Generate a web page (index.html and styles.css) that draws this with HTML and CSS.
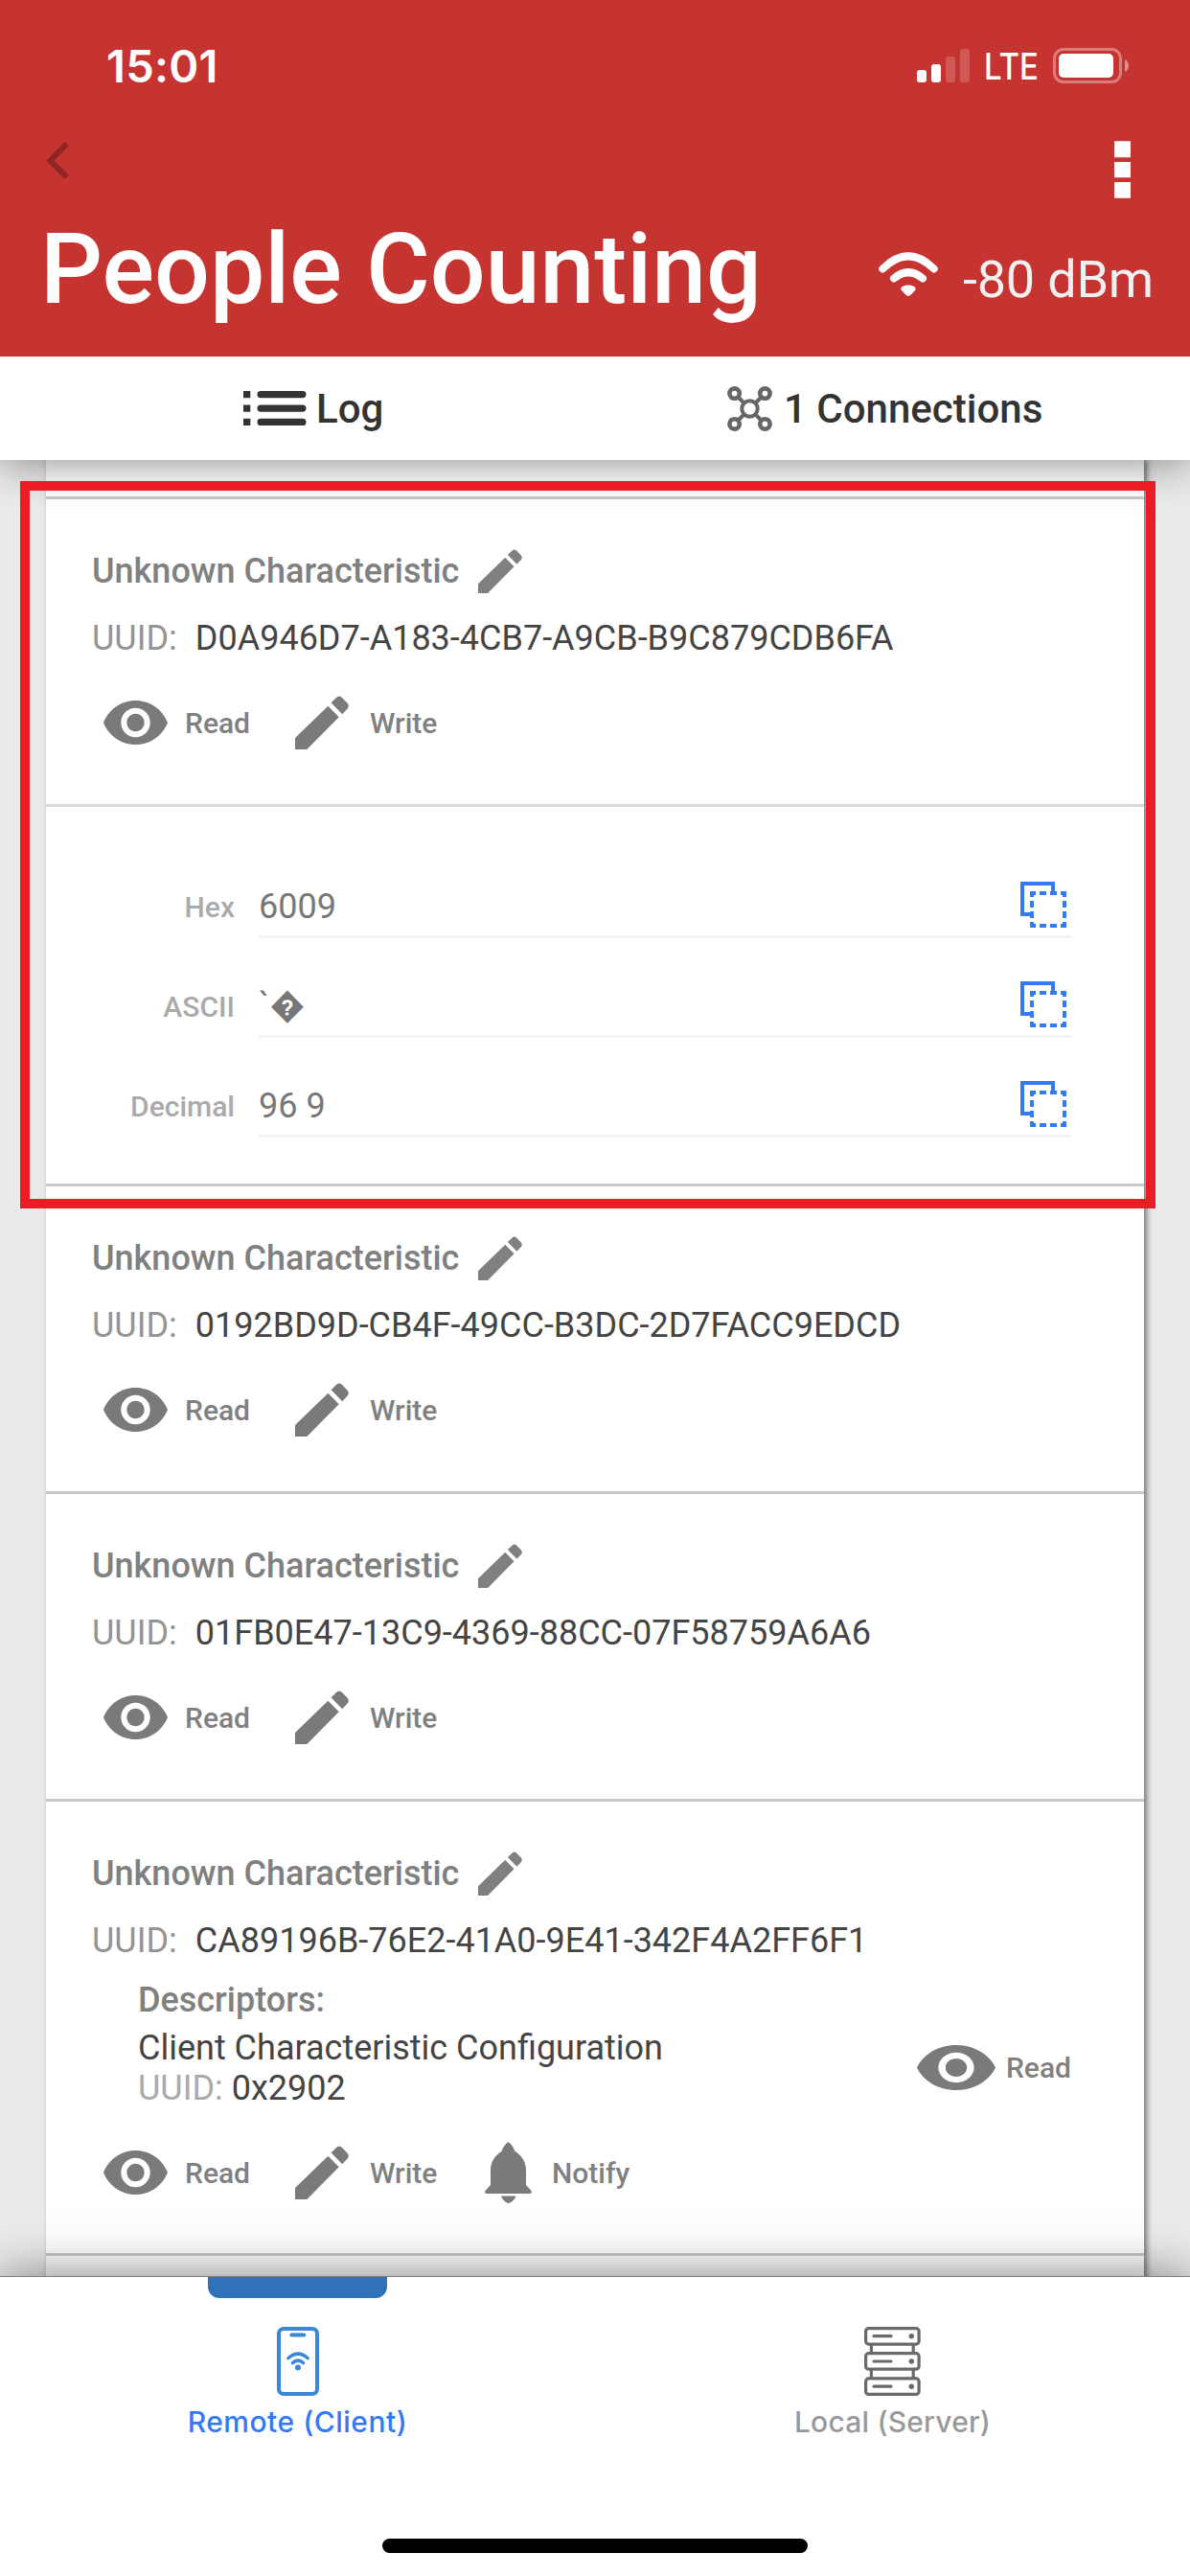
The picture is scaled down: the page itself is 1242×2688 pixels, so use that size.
FILE: index.html
```html
<!DOCTYPE html>
<html lang="en">
<head>
<meta charset="utf-8">
<title>People Counting</title>
<link rel="stylesheet" href="styles.css">
</head>
<body>
<svg class="sprite" aria-hidden="true">
  <symbol id="eye" viewBox="1 4.5 22 15" preserveAspectRatio="none"><path d="M12 4.5C7 4.5 2.73 7.61 1 12c1.73 4.39 6 7.5 11 7.5s9.27-3.11 11-7.5c-1.73-4.39-6-7.5-11-7.5zM12 17c-2.76 0-5-2.24-5-5s2.24-5 5-5 5 2.24 5 5-2.24 5-5 5zm0-8c-1.66 0-3 1.34-3 3s1.34 3 3 3 3-1.34 3-3-1.34-3-3-3z" fill="currentColor"/></symbol>
  <symbol id="pencil" viewBox="0 0 56 56"><path d="M0 56V44L34.4 10.7L45.7 22.3L12.3 56ZM37.6 7.3L43 2Q46 -1 49 2L54.4 7.6Q57.2 10.6 54.4 13.8L49.2 19.3Z" fill="currentColor"/></symbol>
  <symbol id="bell" viewBox="0 0 49 64"><path d="M24.5 .5C27 .5 31 8 31.5 10C37 13 43 20 43 29V45L48.5 51Q49.5 54 47 54H2Q-.5 54 .5 51L6 45V29C6 20 12 13 17.5 10C18 8 22 .5 24.5 .5ZM17 56.5H32.5C31.5 60 27 64 24.7 64S18 60 17 56.5Z" fill="currentColor"/></symbol>
  <symbol id="copy" viewBox="0 0 48 48"><g fill="none" stroke="currentColor" stroke-width="4"><path d="M14 34H2V2H34V13"/><path d="M20 12H46V46H12V12H20" stroke-dasharray="7 4 7 4 8 4"/></g></symbol>
</svg>

<div class="app">
  <header class="header">
    <div class="status">
      <span class="clock">15:01</span>
      <div class="status-icons">
        <svg class="bars" width="55" height="35" viewBox="0 0 55 35" fill="#fff"><rect y="22" width="10" height="13" rx="3"/><rect x="15" y="16" width="10" height="19" rx="3"/><g opacity=".18"><rect x="30" y="8" width="10" height="27" rx="3"/><rect x="45" width="10" height="35" rx="3"/></g></svg>
        <span class="network">LTE</span>
        <svg class="battery" width="79" height="37" viewBox="0 0 79 37"><rect x="1.5" y="1.5" width="69" height="34" rx="9.5" fill="none" stroke="#fff" stroke-opacity=".36" stroke-width="3"/><rect x="6" y="6" width="57" height="25" rx="5" fill="#fff"/><path d="M75 12Q79 14.500 79 18.500T75 25Z" fill="#fff" fill-opacity=".45"/></svg>
      </div>
    </div>
    <div class="nav">
      <svg class="back" width="24" height="39" viewBox="0 0 24 39"><path d="M21.700 2.200L4.500 19.500L21.700 36.800" fill="none" stroke="#912425" stroke-width="6"/></svg>
      <svg class="menu" width="17" height="60" viewBox="0 0 17 60" fill="#fff"><path d="M0 .3H17V17.300H0ZM0 22H17V38.200H0ZM0 43H17V59.700H0Z"/></svg>
    </div>
    <div class="heading">
      <h1 class="title">People Counting</h1>
      <div class="signal">
        <svg width="62" height="46" viewBox="0 0 62 46"><g fill="none" stroke="#fff" stroke-linecap="round" stroke-width="8"><path d="M4.300 17.500Q31 -9 57.700 17.500"/><path d="M16 27.500Q31 15 46 27.500"/></g><path d="M31 46Q29.500 46 28 44.300L24 40C21.500 37 26 34.500 31 34.500S40.500 37 38 40L34 44.300Q32.500 46 31 46Z" fill="#fff"/></svg>
        <span class="rssi">-80 dBm</span>
      </div>
    </div>
  </header>

  <nav class="toolbar">
    <div class="tool tool-log">
      <svg width="66" height="36" viewBox="0 0 66 36" fill="#333"><path d="M0 0H7.300V7.200H0ZM0 14.500H7.300V21.700H0ZM0 28.800H7.300V36H0Z"/><rect x="14.500" width="51" height="7.200" rx="3.600"/><rect x="14.500" y="14.500" width="51" height="7.200" rx="3.600"/><rect x="14.500" y="28.800" width="51" height="7.200" rx="3.600"/></svg>
      <span>Log</span>
    </div>
    <div class="tool tool-connections">
      <svg width="47" height="47" viewBox="0 0 47 47" fill="none" stroke="#666" stroke-width="4.600"><circle cx="7.600" cy="7.600" r="5.200"/><circle cx="39.400" cy="7.600" r="5.200"/><circle cx="7.600" cy="39.400" r="5.200"/><circle cx="39.400" cy="39.400" r="5.200"/><circle cx="23.500" cy="23.500" r="8.200" stroke-width="4"/><path d="M11 11L17.500 17.500M36 11L29.500 17.500M11 36L17.500 29.500M36 36L29.500 29.500" stroke-width="4"/></svg>
      <span>1 Connections</span>
    </div>
  </nav>

  <main class="content">
    <div class="card">
      <div class="previous"></div>

      <section class="characteristic">
        <h2 class="name">Unknown Characteristic <svg class="edit"><use href="#pencil"/></svg></h2>
        <p class="uuid"><span class="key">UUID:</span>D0A946D7-A183-4CB7-A9CB-B9C879CDB6FA</p>
        <div class="actions">
          <div class="action read"><svg><use href="#eye"/></svg>Read</div>
          <div class="action write"><svg><use href="#pencil"/></svg>Write</div>
        </div>
      </section>
      <div class="values">
        <div class="value"><span class="label">Hex</span><div class="field"><span>6009</span><svg class="copy"><use href="#copy"/></svg></div></div>
        <div class="value"><span class="label">ASCII</span><div class="field"><span>`&#xFFFD;</span><svg class="copy"><use href="#copy"/></svg></div></div>
        <div class="value"><span class="label">Decimal</span><div class="field"><span>96 9</span><svg class="copy"><use href="#copy"/></svg></div></div>
      </div>

      <section class="characteristic">
        <h2 class="name">Unknown Characteristic <svg class="edit"><use href="#pencil"/></svg></h2>
        <p class="uuid"><span class="key">UUID:</span>0192BD9D-CB4F-49CC-B3DC-2D7FACC9EDCD</p>
        <div class="actions">
          <div class="action read"><svg><use href="#eye"/></svg>Read</div>
          <div class="action write"><svg><use href="#pencil"/></svg>Write</div>
        </div>
      </section>

      <section class="characteristic">
        <h2 class="name">Unknown Characteristic <svg class="edit"><use href="#pencil"/></svg></h2>
        <p class="uuid"><span class="key">UUID:</span>01FB0E47-13C9-4369-88CC-07F58759A6A6</p>
        <div class="actions">
          <div class="action read"><svg><use href="#eye"/></svg>Read</div>
          <div class="action write"><svg><use href="#pencil"/></svg>Write</div>
        </div>
      </section>

      <section class="characteristic with-descriptors">
        <h2 class="name">Unknown Characteristic <svg class="edit"><use href="#pencil"/></svg></h2>
        <p class="uuid"><span class="key">UUID:</span>CA89196B-76E2-41A0-9E41-342F4A2FF6F1</p>
        <div class="descriptors">
          <h3 class="descriptors-title">Descriptors:</h3>
          <div class="descriptor">
            <div>
              <p class="descriptor-line">Client Characteristic Configuration</p>
              <p class="descriptor-line"><span class="descriptor-key">UUID:</span> 0x2902</p>
            </div>
            <div class="action descriptor-read"><svg><use href="#eye"/></svg>Read</div>
          </div>
        </div>
        <div class="actions">
          <div class="action read"><svg><use href="#eye"/></svg>Read</div>
          <div class="action write"><svg><use href="#pencil"/></svg>Write</div>
          <div class="action notify"><svg><use href="#bell"/></svg>Notify</div>
        </div>
      </section>
      <div class="next"></div>
    </div>
  </main>

  <footer class="tabbar">
    <div class="tabs">
      <div class="tab active">
        <span class="indicator"></span>
        <svg width="44" height="72" viewBox="0 0 44 72" fill="none" stroke="#3b87d3" stroke-linecap="round" stroke-width="4"><rect x="2" y="2" width="40" height="68" rx="5"/><path d="M15.300 8.600H28.300"/><path d="M11.800 32.700Q22 23.500 32.200 32.700M16.300 37.700Q22 32.500 27.700 37.700" stroke-width="3.400"/><circle cx="22" cy="42.400" r="3" fill="#3b87d3" stroke="none"/></svg>
        <span class="tab-label">Remote (Client)</span>
      </div>
      <div class="tab">
        <span class="indicator"></span>
        <svg width="59" height="72" viewBox="0 0 59 72" fill="none" stroke="#6a6a6a" stroke-linecap="round" stroke-width="3.200"><rect x="1.600" y="1.600" width="55.500" height="16.500" rx="3"/><rect x="1.600" y="27.700" width="55.500" height="16.500" rx="3"/><rect x="1.600" y="53.900" width="55.500" height="16.500" rx="3"/><path d="M7.400 19V26M51.200 19V26M7.400 45V53M51.200 45V53" stroke-linecap="butt"/><path d="M10 9.700H28M10 36H28M10 62.200H28"/><g fill="#6a6a6a" stroke="none"><circle cx="49.300" cy="9.700" r="2.700"/><circle cx="49.300" cy="36" r="2.700"/><circle cx="49.300" cy="62.200" r="2.700"/></g></svg>
        <span class="tab-label">Local (Server)</span>
      </div>
    </div>
    <div class="home-indicator"></div>
  </footer>

  <div class="highlight"></div>
</div>
</body>
</html>
```
FILE: styles.css
```css
* { box-sizing: border-box; }
body {
  margin: 0;
  font-family: Roboto, "Liberation Sans", sans-serif;
  background: #ebebeb;
}
h1, h2, h3, p { margin: 0; }
svg { display: block; flex: none; }
.sprite { position: absolute; width: 0; height: 0; }

.app {
  position: relative;
  width: 1242px;
  height: 2688px;
  display: flex;
  flex-direction: column;
  overflow: hidden;
}

/* Header */
.header { height: 372px; flex: none; background: #c63431; color: #fff; position: relative; z-index: 2; }
.status {
  height: 136px;
  display: flex;
  align-items: center;
  justify-content: space-between;
  padding: 0 64px 0 111px;
  font-family: Inter, sans-serif;
}
.clock { font-size: 47px; font-weight: 600; letter-spacing: .3px; }
.status-icons { display: flex; align-items: center; }
.network {
  width: 57px;
  font-size: 37.5px;
  font-weight: 500;
  padding-top: 3px;
  margin: 0 15px;
  transform: scaleX(.88);
  transform-origin: left;
}
.nav { display: flex; justify-content: space-between; align-items: flex-start; padding: 11px 62px 0 48px; height: 71px; }
.back { margin-top: 1px; }
.heading { display: flex; justify-content: space-between; align-items: flex-start; padding: 19px 38px 0 42px; }
.title { font-size: 102px; line-height: 110px; font-weight: 500; white-space: nowrap; }
.signal { display: flex; align-items: flex-start; gap: 26px; margin-top: 37px; }
.rssi { font-size: 54px; line-height: 60px; letter-spacing: -.2px; margin-top: -1px; color: #f0f0f0; white-space: nowrap; }

/* Toolbar */
.toolbar {
  height: 108px;
  flex: none;
  display: grid;
  grid-template-columns: 1fr 1fr;
  background: #fff;
  box-shadow: 0 0 50px rgba(0, 0, 0, .5);
  position: relative;
  z-index: 1;
}
.tool { display: flex; align-items: center; font-size: 42px; font-weight: 500; color: #333; }
.tool-log { padding-left: 254px; gap: 10px; }
.tool-connections { padding-left: 138px; gap: 12px; }

/* Characteristic list */
.content { flex: 1; min-height: 0; padding: 0 48px; overflow: hidden; }
.card { background: #fff; box-shadow: 3px 0 6px rgba(0, 0, 0, .5); }
.previous { height: 38px; }
.next { height: 60px; border-top: 3px solid #c9c9c9; }
.characteristic { border-top: 3px solid #c9c9c9; padding: 52px 48px 57px; }
.with-descriptors { padding-bottom: 56px; }
.name {
  display: flex;
  gap: 20px;
  height: 46px;
  font-size: 36px;
  line-height: 46px;
  font-weight: 500;
  color: #808080;
}
.edit { width: 46px; height: 46px; }
.uuid { margin-top: 24px; font-size: 36px; line-height: 46px; color: #444; white-space: nowrap; }
.key { color: #949494; margin-right: 19px; }
.actions { display: flex; margin: 37px 0 0 12px; height: 56px; }
.action { display: flex; align-items: center; font-size: 30px; font-weight: 500; color: #808080; }
.action svg { color: #7a7a7a; }
.read { width: 200px; gap: 18px; }
.read svg { width: 67px; height: 46px; }
.write { width: 198px; gap: 22px; }
.write svg { width: 56px; height: 56px; }
.notify { gap: 21px; }
.notify svg { width: 49px; height: 64px; }

.values { border-top: 3px solid #d8d8d8; padding: 33px 75px 48px 48px; }
.value { display: grid; grid-template-columns: 149px 1fr; column-gap: 25px; height: 104px; align-items: end; }
.label { text-align: right; font-size: 30px; line-height: 46px; font-weight: 500; color: #aaa; padding-bottom: 9px; }
.field {
  display: flex;
  justify-content: space-between;
  align-items: flex-end;
  padding: 0 6px 7px 0;
  border-bottom: 3px solid #f3f3f3;
  font-size: 36px;
  line-height: 46px;
  color: #777;
}
.copy { width: 48px; height: 48px; margin-bottom: 1px; color: #337af6; }

.descriptors { margin-top: 16px; padding-left: 48px; }
.descriptors-title { font-size: 36px; line-height: 46px; font-weight: 500; color: #808080; }
.descriptor { display: flex; justify-content: space-between; margin-top: 6px; padding-right: 28px; }
.descriptor-line { font-size: 36px; line-height: 42px; color: #444; }
.descriptor-key { color: #aaa; }
.descriptor-read { gap: 11px; padding-bottom: 2px; }
.descriptor-read svg { width: 82px; height: 47px; }
.with-descriptors .actions { margin-top: 39px; }

/* Tab bar */
.tabbar {
  height: 313px;
  flex: none;
  border-top: 1px solid #7d7d7d;
  background: #fff;
  box-shadow: 0 0 50px rgba(0, 0, 0, .5);
  position: relative;
  z-index: 1;
}
.tabs { display: grid; grid-template-columns: 1fr 1fr; height: 273px; }
.tab { display: flex; flex-direction: column; align-items: center; color: #999; letter-spacing: .2px; }
.indicator { width: 187px; height: 22px; border-radius: 0 0 12px 12px; margin-bottom: 30px; }
.active { color: #3379f6; letter-spacing: .5px; }
.active .indicator { background: #2f72ba; }
.tab-label { margin-top: 7px; font-family: Inter, sans-serif; font-size: 30px; line-height: 40px; font-weight: 500; }
.home-indicator { width: 444px; height: 15px; border-radius: 8px; background: #000; margin: 0 auto; }

/* Frame drawn over the expanded characteristic */
.highlight { position: absolute; z-index: 3; left: 21px; top: 502px; width: 1185px; height: 759px; border: 10px solid #ed1c24; }
```
